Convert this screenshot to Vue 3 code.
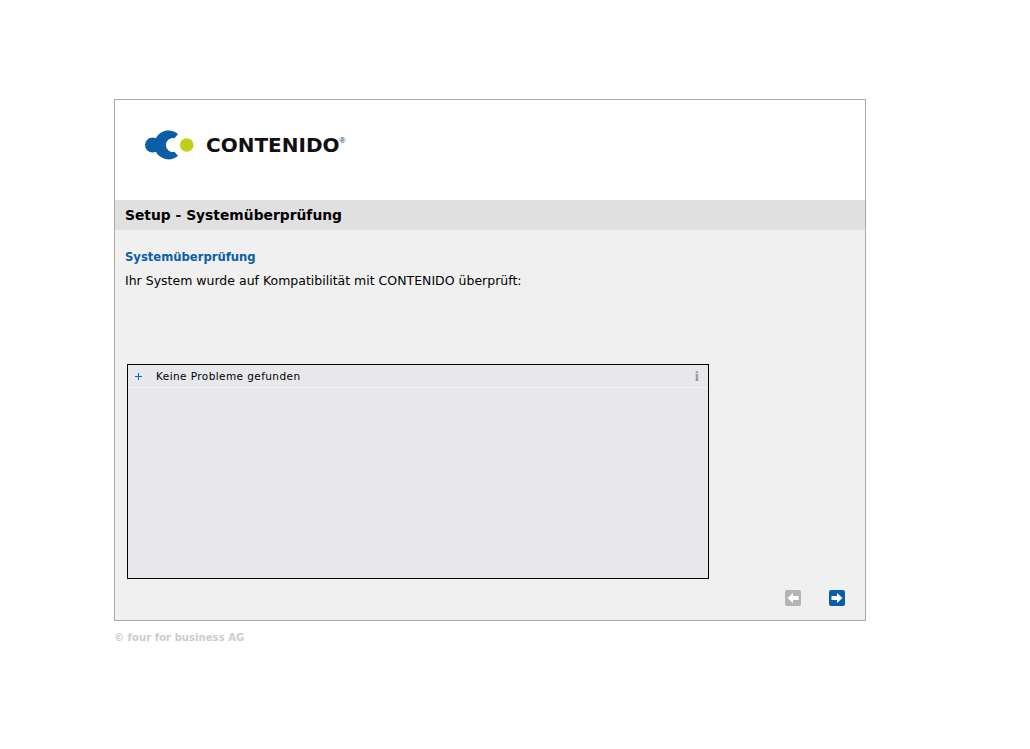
<template>
  <div class="page">
    <div class="panel">
      <header class="head">
        <div class="logo">
          <svg class="mark" width="50" height="30" viewBox="0 0 50 30">
            <circle cx="7.5" cy="15" r="7.5" fill="#0a5ea8" />
            <path d="M22 0.5 A14.5 14.5 0 1 0 33 26 L29.5 21.8 A7 7 0 1 1 29.5 8.2 L33 4 A14.5 14.5 0 0 0 22 0.5 Z" fill="#0a5ea8" />
            <circle cx="41.7" cy="15" r="6.8" fill="#bfd116" />
          </svg>
          <span class="word">CONTENIDO</span><span class="reg">®</span>
        </div>
      </header>
      <h1 class="title">Setup - Systemüberprüfung</h1>
      <main class="body">
        <h2 class="sub">Systemüberprüfung</h2>
        <p class="intro">Ihr System wurde auf Kompatibilität mit CONTENIDO überprüft:</p>
        <section class="box">
          <div class="row">
            <svg class="plus" width="7" height="7" viewBox="0 0 7 7"><path d="M3 0 H4 V3 H7 V4 H4 V7 H3 V4 H0 V3 H3 Z" fill="#0a6cc8" /></svg>
            <span class="label">Keine Probleme gefunden</span>
            <span class="info">i</span>
          </div>
        </section>
        <nav class="nav">
          <button class="btn prev" aria-label="Zurück">
            <svg width="16" height="16" viewBox="0 0 16 16"><path d="M2.5 8 L8 3 V6 H13.5 V10 H8 V13 Z" fill="#fff" /></svg>
          </button>
          <button class="btn next" aria-label="Weiter">
            <svg width="16" height="16" viewBox="0 0 16 16"><path d="M13.5 8 L8 3 V6 H2.5 V10 H8 V13 Z" fill="#fff" /></svg>
          </button>
        </nav>
      </main>
    </div>
    <footer class="foot">© four for business AG</footer>
  </div>
</template>

<script setup>
</script>

<style>
html, body { margin: 0; background: #fff; }
</style>

<style scoped>
.page {
  padding: 99px 0 0 114px;
  font-family: "DejaVu Sans", Verdana, sans-serif;
  color: #000;
}
.panel {
  width: 750px;
  border: 1px solid #aaa;
  background: #f0f0f0;
}
.head {
  height: 100px;
  background: #fff;
  display: flex;
  align-items: flex-start;
}
.logo {
  display: flex;
  align-items: center;
  margin: 30px 0 0 30px;
  height: 30px;
}
.mark { display: block; }
.word {
  margin-left: 11px;
  font-family: "DejaVu Sans", sans-serif;
  font-weight: 700;
  font-size: 20px;
  color: #111;
}
.reg {
  font-family: "Liberation Sans", sans-serif;
  font-size: 8px;
  align-self: flex-start;
  margin: 6px 0 0 0;
  color: #222;
}
.title {
  margin: 0;
  height: 30px;
  line-height: 30px;
  padding-left: 10px;
  background: #e0e0e0;
  font-size: 13.85px;
  font-weight: 700;
}
.body {
  height: 390px;
  padding: 20px 10px 0;
  box-sizing: border-box;
  display: flex;
  flex-direction: column;
}
.sub {
  margin: 0;
  font-size: 11.6px;
  line-height: 15px;
  font-weight: 700;
  color: #0a5ea8;
}
.intro {
  margin: 8px 0 0;
  font-size: 12.5px;
  line-height: 15px;
}
.box {
  margin: 76px 0 0 2px;
  width: 580px;
  height: 213px;
  border: 1px solid #000;
  background: #e8e8ec;
}
.row {
  height: 22px;
  border-bottom: 1px solid #f4f4f6;
  display: flex;
  align-items: center;
  font-size: 10.5px;
}
.plus {
  flex: none;
  margin: 0 14px 0 7px;
}
.label { flex: 1; letter-spacing: 0.42px; }
.info {
  font-family: "Liberation Serif", serif;
  font-weight: 700;
  font-size: 15px;
  color: #999;
  margin-right: 9px;
}
.nav {
  display: flex;
  justify-content: flex-end;
  gap: 28px;
  margin: 11px 10px 0 0;
}
.btn {
  width: 16px;
  height: 16px;
  padding: 0;
  border: 0;
  border-radius: 2px;
  display: block;
}
.btn svg { display: block; }
.prev { background: #b4b4b4; }
.next { background: #0a5ea8; }
.foot {
  margin-top: 10px;
  font-size: 10px;
  line-height: 13px;
  font-weight: 700;
  letter-spacing: 0.07px;
  color: #ccc;
}
</style>
